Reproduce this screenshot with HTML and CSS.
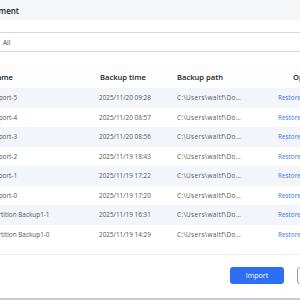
FILE: index.html
```html
<!DOCTYPE html>
<html>
<head>
<meta charset="utf-8">
<link rel="stylesheet" href="styles.css">
</head>
<body>
<div class="dialog">
  <div class="title">
    <div class="title-box"><span class="title-text">Backup management</span></div>
  </div>
  <div class="filter">
    <div class="select">All</div>
  </div>
  <table class="grid">
    <colgroup>
      <col class="c-name">
      <col class="c-time">
      <col class="c-path">
      <col class="c-op">
    </colgroup>
    <thead>
      <tr>
        <th class="h-name">Name</th>
        <th class="h-time">Backup time</th>
        <th class="h-path">Backup path</th>
        <th class="h-op">Operation</th>
      </tr>
    </thead>
    <tbody>
      <tr class="alt"><td class="d-name">Import-5</td><td>2025/11/20 09:28</td><td class="path">C:\Users\waltf\Do…</td><td class="op">Restore</td></tr>
      <tr><td class="d-name">Import-4</td><td>2025/11/20 08:57</td><td class="path">C:\Users\waltf\Do…</td><td class="op">Restore</td></tr>
      <tr class="alt"><td class="d-name">Import-3</td><td>2025/11/20 08:56</td><td class="path">C:\Users\waltf\Do…</td><td class="op">Restore</td></tr>
      <tr><td class="d-name">Import-2</td><td>2025/11/19 18:43</td><td class="path">C:\Users\waltf\Do…</td><td class="op">Restore</td></tr>
      <tr class="alt"><td class="d-name">Import-1</td><td>2025/11/19 17:22</td><td class="path">C:\Users\waltf\Do…</td><td class="op">Restore</td></tr>
      <tr><td class="d-name">Import-0</td><td>2025/11/19 17:20</td><td class="path">C:\Users\waltf\Do…</td><td class="op">Restore</td></tr>
      <tr class="alt"><td class="d-name">Partition Backup1-1</td><td>2025/11/19 16:31</td><td class="path">C:\Users\waltf\Do…</td><td class="op">Restore</td></tr>
      <tr><td class="d-name">Partition Backup1-0</td><td>2025/11/19 14:29</td><td class="path">C:\Users\waltf\Do…</td><td class="op">Restore</td></tr>
    </tbody>
  </table>
  <div class="table-end"></div>
  <div class="footer">
    <button class="btn primary">Import</button>
    <button class="btn ghost">Cancel</button>
  </div>
</div>
</body>
</html>
```
FILE: styles.css
```css
html, body {
  margin: 0;
  padding: 0;
  background: #ffffff;
  overflow: hidden;
  width: 300px;
  height: 300px;
}
body {
  font-family: "Open Sans", "Noto Sans", sans-serif;
  color: #333;
}
.dialog {
  margin-left: -9px;
  width: 380px;
  height: 298px;
  border-bottom: 2px solid #c9cadd;
  display: flex;
  flex-direction: column;
}
.title {
  height: 20px;
  background: #f5f6f8;
  display: flex;
  align-items: center;
}
.title-box {
  width: 28px;
  display: flex;
  justify-content: flex-end;
}
.title-text {
  white-space: nowrap;
  font-size: 8px;
  font-weight: 600;
  color: #222;
}
.filter {
  padding-top: 12px;
  height: 20px;
}
.select {
  margin-left: -20px;
  width: 420px;
  height: 18px;
  border-top: 1px solid #d6d7dc;
  border-bottom: 1px solid #d6d7dc;
  box-sizing: content-box;
  padding-left: 32px;
  display: flex;
  align-items: center;
  font-size: 6.5px;
  color: #444;
}
.grid {
  margin-top: 13px;
  border-collapse: collapse;
  table-layout: fixed;
  width: 380px;
}
.c-name { width: 108px; }
.c-time { width: 78px; }
.c-path { width: 101px; }
.c-op { width: 93px; }
.grid th {
  height: 23px;
  padding: 0;
  text-align: left;
  font-size: 7.6px;
  font-weight: 600;
  color: #222;
  background: #fdfdfe;
  white-space: nowrap;
}
.grid th.h-time { padding-left: 1px; }
.grid th.h-op { padding-left: 15px; }
.grid td {
  height: 19.5px;
  padding: 0;
  font-size: 6.4px;
  color: #555;
  white-space: nowrap;
  overflow: hidden;
}
.grid td.path { letter-spacing: 0.35px; }
.grid tr.alt td { background: #f3f5fb; }
.grid td.op { color: #3a78dc; }
.table-end {
  height: 10px;
  border-bottom: 1px solid #eef0f4;
}
.footer {
  display: flex;
  gap: 13px;
  padding-left: 239px;
  padding-top: 12px;
}
.btn {
  height: 17px;
  border-radius: 3px;
  font-family: inherit;
  font-size: 7px;
  padding: 0;
  display: flex;
  align-items: center;
  justify-content: center;
}
.primary {
  width: 54px;
  background: #2d6ff2;
  border: none;
  color: #fff;
}
.ghost {
  width: 54px;
  background: #fff;
  border: 1px solid #8a9bbf;
  color: #333;
}
```
